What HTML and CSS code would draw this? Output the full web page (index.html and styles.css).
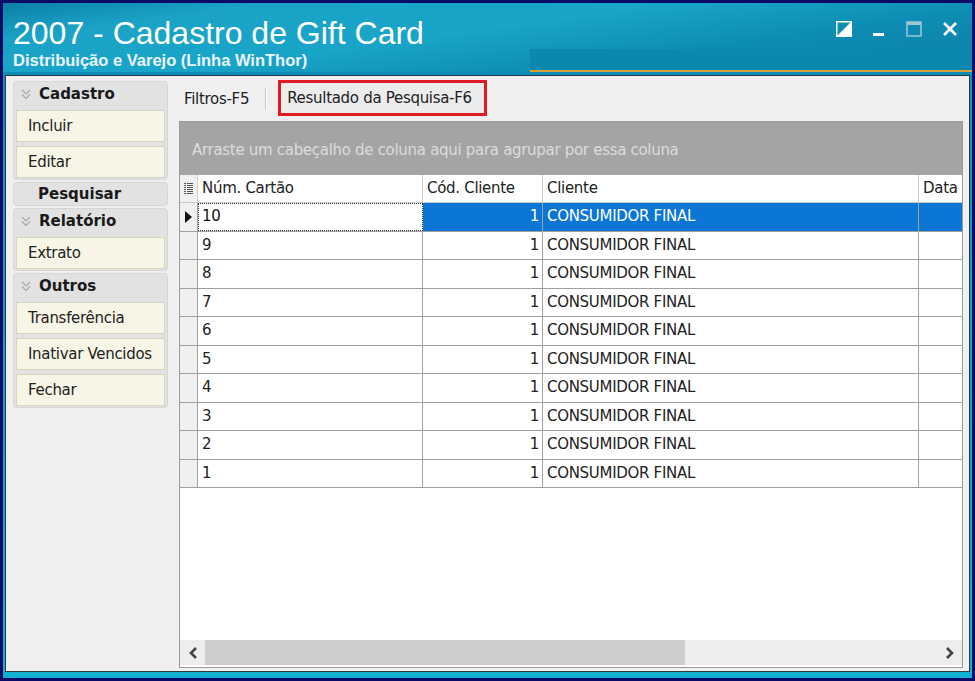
FILE: index.html
```html
<!DOCTYPE html>
<html lang="pt-BR">
<head>
    <meta charset="UTF-8">
    <title>2007 - Cadastro de Gift Card</title>
    <link rel="stylesheet" href="styles.css">
</head>
<body>
    <div class="frame">
        <div class="window">
            <div class="titlebar">
                <div class="title-text">
                    <h1>2007 - Cadastro de Gift Card</h1>
                    <div class="subtitle">Distribuição e Varejo (Linha WinThor)</div>
                </div>
                <div class="win-controls">
                    <svg width="16" height="16" viewBox="0 0 16 16"><rect x="0.75" y="0.75" width="14.5" height="14.5" fill="none" stroke="#fff" stroke-width="1.5"/><polygon points="1,15 15,1 15,15" fill="#fff"/></svg>
                    <svg width="14" height="16" viewBox="0 0 14 16"><rect x="1" y="12" width="11" height="3" fill="#fff"/></svg>
                    <svg width="16" height="16" viewBox="0 0 16 16"><rect x="1" y="1" width="14" height="14" fill="none" stroke="#9fc6d6" stroke-width="1.5"/><rect x="1" y="1" width="14" height="3" fill="#9fc6d6"/></svg>
                    <svg width="16" height="16" viewBox="0 0 16 16"><path d="M2 2 L14 14 M14 2 L2 14" stroke="#fff" stroke-width="2.6"/></svg>
                </div>
            </div>

            <div class="client">
                <div class="sidebar">
                    <div class="group">
                        <div class="group-head">
                            <svg class="chev" width="10" height="11" viewBox="0 0 10 11"><path d="M1 1 L5 5 L9 1 M1 5.5 L5 9.5 L9 5.5" fill="none" stroke="#a9a9a9" stroke-width="1.2"/></svg>
                            Cadastro
                        </div>
                        <div class="side-btn">Incluir</div>
                        <div class="side-btn">Editar</div>
                    </div>
                    <div class="group single">
                        <div class="group-head plain">Pesquisar</div>
                    </div>
                    <div class="group">
                        <div class="group-head">
                            <svg class="chev" width="10" height="11" viewBox="0 0 10 11"><path d="M1 1 L5 5 L9 1 M1 5.5 L5 9.5 L9 5.5" fill="none" stroke="#a9a9a9" stroke-width="1.2"/></svg>
                            Relatório
                        </div>
                        <div class="side-btn">Extrato</div>
                    </div>
                    <div class="group">
                        <div class="group-head">
                            <svg class="chev" width="10" height="11" viewBox="0 0 10 11"><path d="M1 1 L5 5 L9 1 M1 5.5 L5 9.5 L9 5.5" fill="none" stroke="#a9a9a9" stroke-width="1.2"/></svg>
                            Outros
                        </div>
                        <div class="side-btn">Transferência</div>
                        <div class="side-btn">Inativar Vencidos</div>
                        <div class="side-btn">Fechar</div>
                    </div>
                </div>

                <div class="main">
                    <div class="tabs">
                        <div class="tab">Filtros-F5</div>
                        <div class="tab-sep"></div>
                        <div class="tab active">Resultado da Pesquisa-F6</div>
                    </div>

                    <div class="grid">
                        <div class="group-panel">Arraste um cabeçalho de coluna aqui para agrupar por essa coluna</div>
                        <div class="grid-body">
                            <div class="row head">
                                <div class="cell ind">
                                    <svg width="9" height="11" viewBox="0 0 9 11"><g fill="#555"><rect x="0" y="0" width="2" height="1"/><rect x="3" y="0" width="6" height="1"/><rect x="0" y="2" width="2" height="1"/><rect x="3" y="2" width="6" height="1"/><rect x="0" y="4" width="2" height="1"/><rect x="3" y="4" width="6" height="1"/><rect x="0" y="6" width="2" height="1"/><rect x="3" y="6" width="6" height="1"/><rect x="0" y="8" width="2" height="1"/><rect x="3" y="8" width="6" height="1"/><rect x="0" y="10" width="2" height="1"/><rect x="3" y="10" width="6" height="1"/></g></svg>
                                </div>
                                <div class="cell">Núm. Cartão</div>
                                <div class="cell">Cód. Cliente</div>
                                <div class="cell">Cliente</div>
                                <div class="cell last">Data</div>
                            </div>
                            <div class="row selected">
                                <div class="cell ind"><svg width="7" height="12" viewBox="0 0 7 12"><polygon points="0,0 7,6 0,12" fill="#111"/></svg></div>
                                <div class="cell focus">10</div>
                                <div class="cell num">1</div>
                                <div class="cell">CONSUMIDOR FINAL</div>
                                <div class="cell last"></div>
                            </div>
                            <div class="row"><div class="cell ind"></div><div class="cell">9</div><div class="cell num">1</div><div class="cell">CONSUMIDOR FINAL</div><div class="cell last"></div></div>
                            <div class="row"><div class="cell ind"></div><div class="cell">8</div><div class="cell num">1</div><div class="cell">CONSUMIDOR FINAL</div><div class="cell last"></div></div>
                            <div class="row"><div class="cell ind"></div><div class="cell">7</div><div class="cell num">1</div><div class="cell">CONSUMIDOR FINAL</div><div class="cell last"></div></div>
                            <div class="row"><div class="cell ind"></div><div class="cell">6</div><div class="cell num">1</div><div class="cell">CONSUMIDOR FINAL</div><div class="cell last"></div></div>
                            <div class="row"><div class="cell ind"></div><div class="cell">5</div><div class="cell num">1</div><div class="cell">CONSUMIDOR FINAL</div><div class="cell last"></div></div>
                            <div class="row"><div class="cell ind"></div><div class="cell">4</div><div class="cell num">1</div><div class="cell">CONSUMIDOR FINAL</div><div class="cell last"></div></div>
                            <div class="row"><div class="cell ind"></div><div class="cell">3</div><div class="cell num">1</div><div class="cell">CONSUMIDOR FINAL</div><div class="cell last"></div></div>
                            <div class="row"><div class="cell ind"></div><div class="cell">2</div><div class="cell num">1</div><div class="cell">CONSUMIDOR FINAL</div><div class="cell last"></div></div>
                            <div class="row"><div class="cell ind"></div><div class="cell">1</div><div class="cell num">1</div><div class="cell">CONSUMIDOR FINAL</div><div class="cell last"></div></div>
                        </div>
                        <div class="hscroll">
                            <div class="arrow">
                                <svg width="10" height="12" viewBox="0 0 10 12"><path d="M8 1 L3 6 L8 11" fill="none" stroke="#444" stroke-width="2.6"/></svg>
                            </div>
                            <div class="track"><div class="thumb"></div></div>
                            <div class="arrow">
                                <svg width="10" height="12" viewBox="0 0 10 12"><path d="M2 1 L7 6 L2 11" fill="none" stroke="#444" stroke-width="2.6"/></svg>
                            </div>
                        </div>
                    </div>
                </div>
            </div>
        </div>
    </div>
</body>
</html>
```

FILE: styles.css
```css
body {
    margin: 0;
    font-family: 'DejaVu Sans', 'Liberation Sans', sans-serif;
    color: #222;
}

.frame {
    width: 975px;
    height: 681px;
    box-sizing: border-box;
    background-color: #0a0a68;
    padding: 3px 3px 3px 3px;
}

.window {
    height: 100%;
    display: flex;
    flex-direction: column;
    background: linear-gradient(180deg, #0f8fb6 0%, #10a4c8 60%, #0fb0d0 100%);
    padding: 0 2px 6px 2px;
    box-sizing: border-box;
}

/* title bar */
.titlebar {
    position: relative;
    height: 69px;
    flex: none;
    display: flex;
    justify-content: space-between;
    background: linear-gradient(172deg, #0b7fa6 0%, #1aa3c6 18%, #19a5c8 45%, #0d8db4 70%, #0c7ea6 100%);
    margin: 0 -2px;
    padding: 0 14px 0 10px;
    border-bottom: 3px solid #0b8db3;
}

.titlebar::after {
    content: '';
    position: absolute;
    left: 527px;
    right: 0;
    top: 46px;
    height: 21px;
    background-color: #0a88ad;
    border-bottom: 2px solid #d5a33a;
}

.title-text {
    padding-top: 12px;
}

h1 {
    margin: 0;
    font-family: 'Liberation Sans', Arial, sans-serif;
    font-weight: normal;
    font-size: 32px;
    line-height: 36px;
    color: #ffffff;
}

.subtitle {
    font-family: 'Liberation Sans', Arial, sans-serif;
    font-weight: bold;
    font-size: 16.5px;
    line-height: 18px;
    color: #eaf6fb;
}

.win-controls {
    display: flex;
    gap: 20px;
    padding-top: 18px;
    align-items: flex-start;
}

.win-controls svg {
    display: block;
}

/* client area */
.client {
    flex: 1;
    display: flex;
    background-color: #f0f0f0;
    border: 1px solid #2b3a40;
    padding: 5px 6px 3px 7px;
    gap: 11px;
}

.sidebar {
    width: 155px;
    flex: none;
    display: flex;
    flex-direction: column;
    gap: 2px;
}

.group {
    background-color: #e2e2e2;
    border: 1px solid #d6d6d6;
    border-radius: 4px;
    padding: 0 2px 1px 2px;
    display: flex;
    flex-direction: column;
    gap: 4px;
}

.group.single {
    padding-bottom: 0;
}

.group-head {
    height: 24px;
    display: flex;
    align-items: center;
    font-weight: bold;
    font-size: 15px;
    color: #1a1a1a;
    padding-left: 5px;
}

.group.single .group-head {
    height: 22px;
}

.group-head.plain {
    padding-left: 22px;
}

.chev {
    margin-right: 8px;
}

.side-btn {
    height: 32px;
    box-sizing: border-box;
    line-height: 30px;
    background-color: #f7f5e6;
    border: 1px solid #d9d5bd;
    font-size: 15px;
    color: #222;
    padding-left: 11px;
    letter-spacing: -0.3px;
}

/* tabs and grid */
.main {
    flex: 1;
    display: flex;
    flex-direction: column;
}

.tabs {
    height: 36px;
    flex: none;
    display: flex;
    align-items: center;
    font-size: 15px;
    letter-spacing: -0.3px;
}

.tab {
    padding: 0 5px;
}

.tab-sep {
    width: 1px;
    height: 22px;
    background-color: #c6c6c6;
    border-right: 1px solid #ffffff;
    margin: 0 11px 0 11px;
}

.tab.active {
    height: 30px;
    line-height: 30px;
    background-color: #ececec;
    border: 3px solid #e01b24;
    padding: 0 12px 0 6px;
    margin-top: -3px;
}

.grid {
    flex: 1;
    margin-top: 4px;
    display: flex;
    flex-direction: column;
    border: 1px solid #9a9a9a;
    background-color: #ffffff;
}

.group-panel {
    height: 53px;
    flex: none;
    background-color: #a4a4a4;
    color: #dcdcdc;
    font-size: 15px;
    letter-spacing: -0.3px;
    padding-left: 12px;
    line-height: 56px;
}

.grid-body {
    flex: 1;
}

.row {
    display: grid;
    grid-template-columns: 18px 225px 120px 376px 1fr;
    height: 28.5px;
    box-sizing: border-box;
    border-bottom: 1px solid #a0a0a0;
    font-size: 15px;
    letter-spacing: -0.3px;
}

.row.head {
    height: 28px;
    border-bottom: 1px solid #c8c8c8;
}

.cell {
    border-right: 1px solid #a0a0a0;
    padding-left: 4px;
    line-height: 27px;
    white-space: nowrap;
    overflow: hidden;
}

.cell.last {
    border-right: none;
}

.row.head .cell {
    border-right-color: #d0d0d0;
}

.cell.ind {
    background-color: #f0f0f0;
    padding-left: 0;
    display: flex;
    align-items: center;
    justify-content: center;
}

.cell.num {
    text-align: right;
    padding-right: 3px;
}

.row.selected .cell {
    background-color: #0b76d5;
    color: #ffffff;
}

.row.selected .cell.ind {
    background-color: #f0f0f0;
}

.row.selected .cell.focus {
    background-color: #ffffff;
    color: #111;
    border: 1px dotted #333;
    line-height: 25px;
    padding-left: 3px;
}

.hscroll {
    height: 25px;
    flex: none;
    display: flex;
    background-color: #ededed;
    margin-bottom: 2px;
}

.arrow {
    width: 25px;
    display: flex;
    align-items: center;
    justify-content: center;
}

.track {
    flex: 1;
    display: flex;
}

.thumb {
    width: 480px;
    background-color: #cdcdcd;
}
```
